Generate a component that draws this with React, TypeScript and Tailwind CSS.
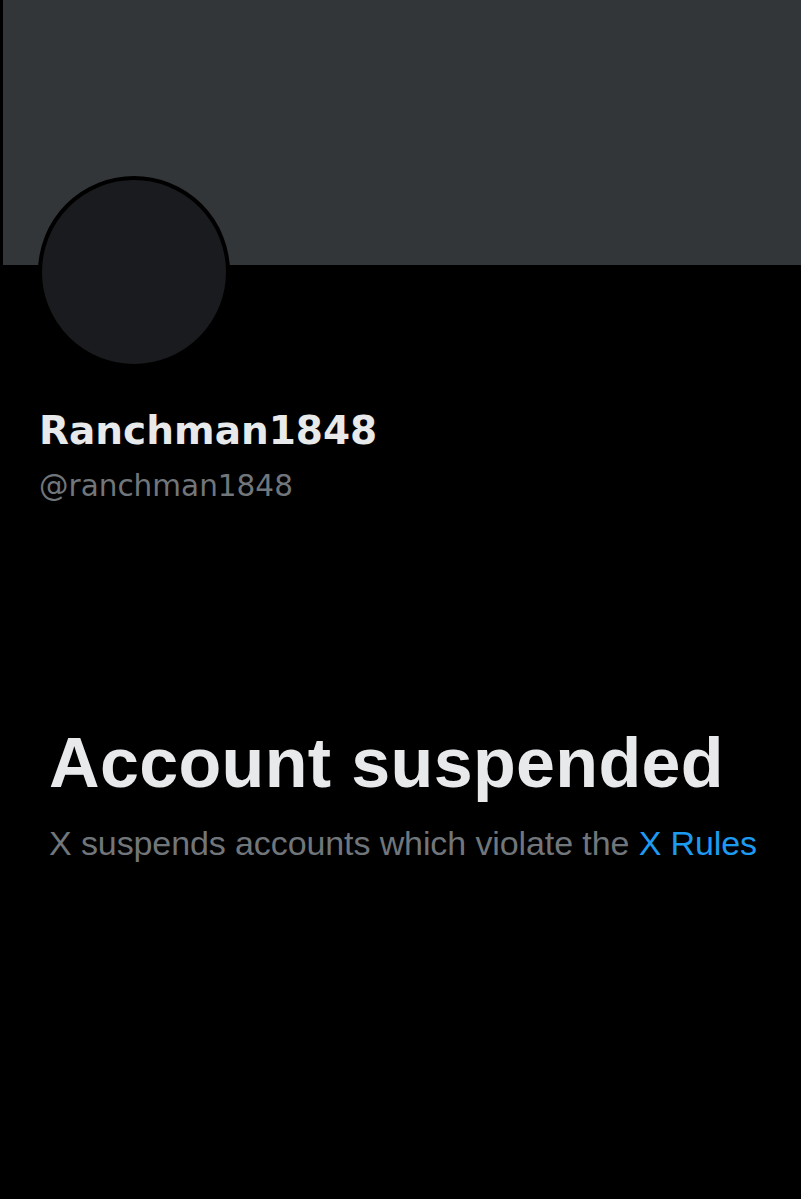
import React from "react";

export default function App() {
  return (
    <div className="min-h-[1199px] w-full bg-black flex flex-col">
      <div className="ml-[3px] h-[265px] bg-[#333639]" />
      <div className="pl-[38px] -mt-[89px]">
        <div className="w-[192px] h-[192px] rounded-full border-[4px] border-black bg-[#1a1b1e]" />
      </div>
      <div className="pl-[39px] mt-[40px] flex flex-col font-['DejaVu_Sans',sans-serif]">
        <h1 className="text-[39px] leading-[46px] font-bold text-[#e7e9ea]">Ranchman1848</h1>
        <p className="mt-[14px] text-[29.5px] leading-[36px] text-[#71767b]">@ranchman1848</p>
      </div>
      <div className="pl-[49px] mt-[219px] flex flex-col font-['Liberation_Sans',Arial,sans-serif]">
        <h2 className="text-[70px] leading-[80px] font-bold tracking-[0.35px] text-[#e7e9ea]">Account suspended</h2>
        <p className="mt-[20px] text-[34px] leading-[40px] tracking-[-0.1px] text-[#71767b]">
          X suspends accounts which violate the <span className="text-[#1d9bf0]">X Rules</span>
        </p>
      </div>
    </div>
  );
}
